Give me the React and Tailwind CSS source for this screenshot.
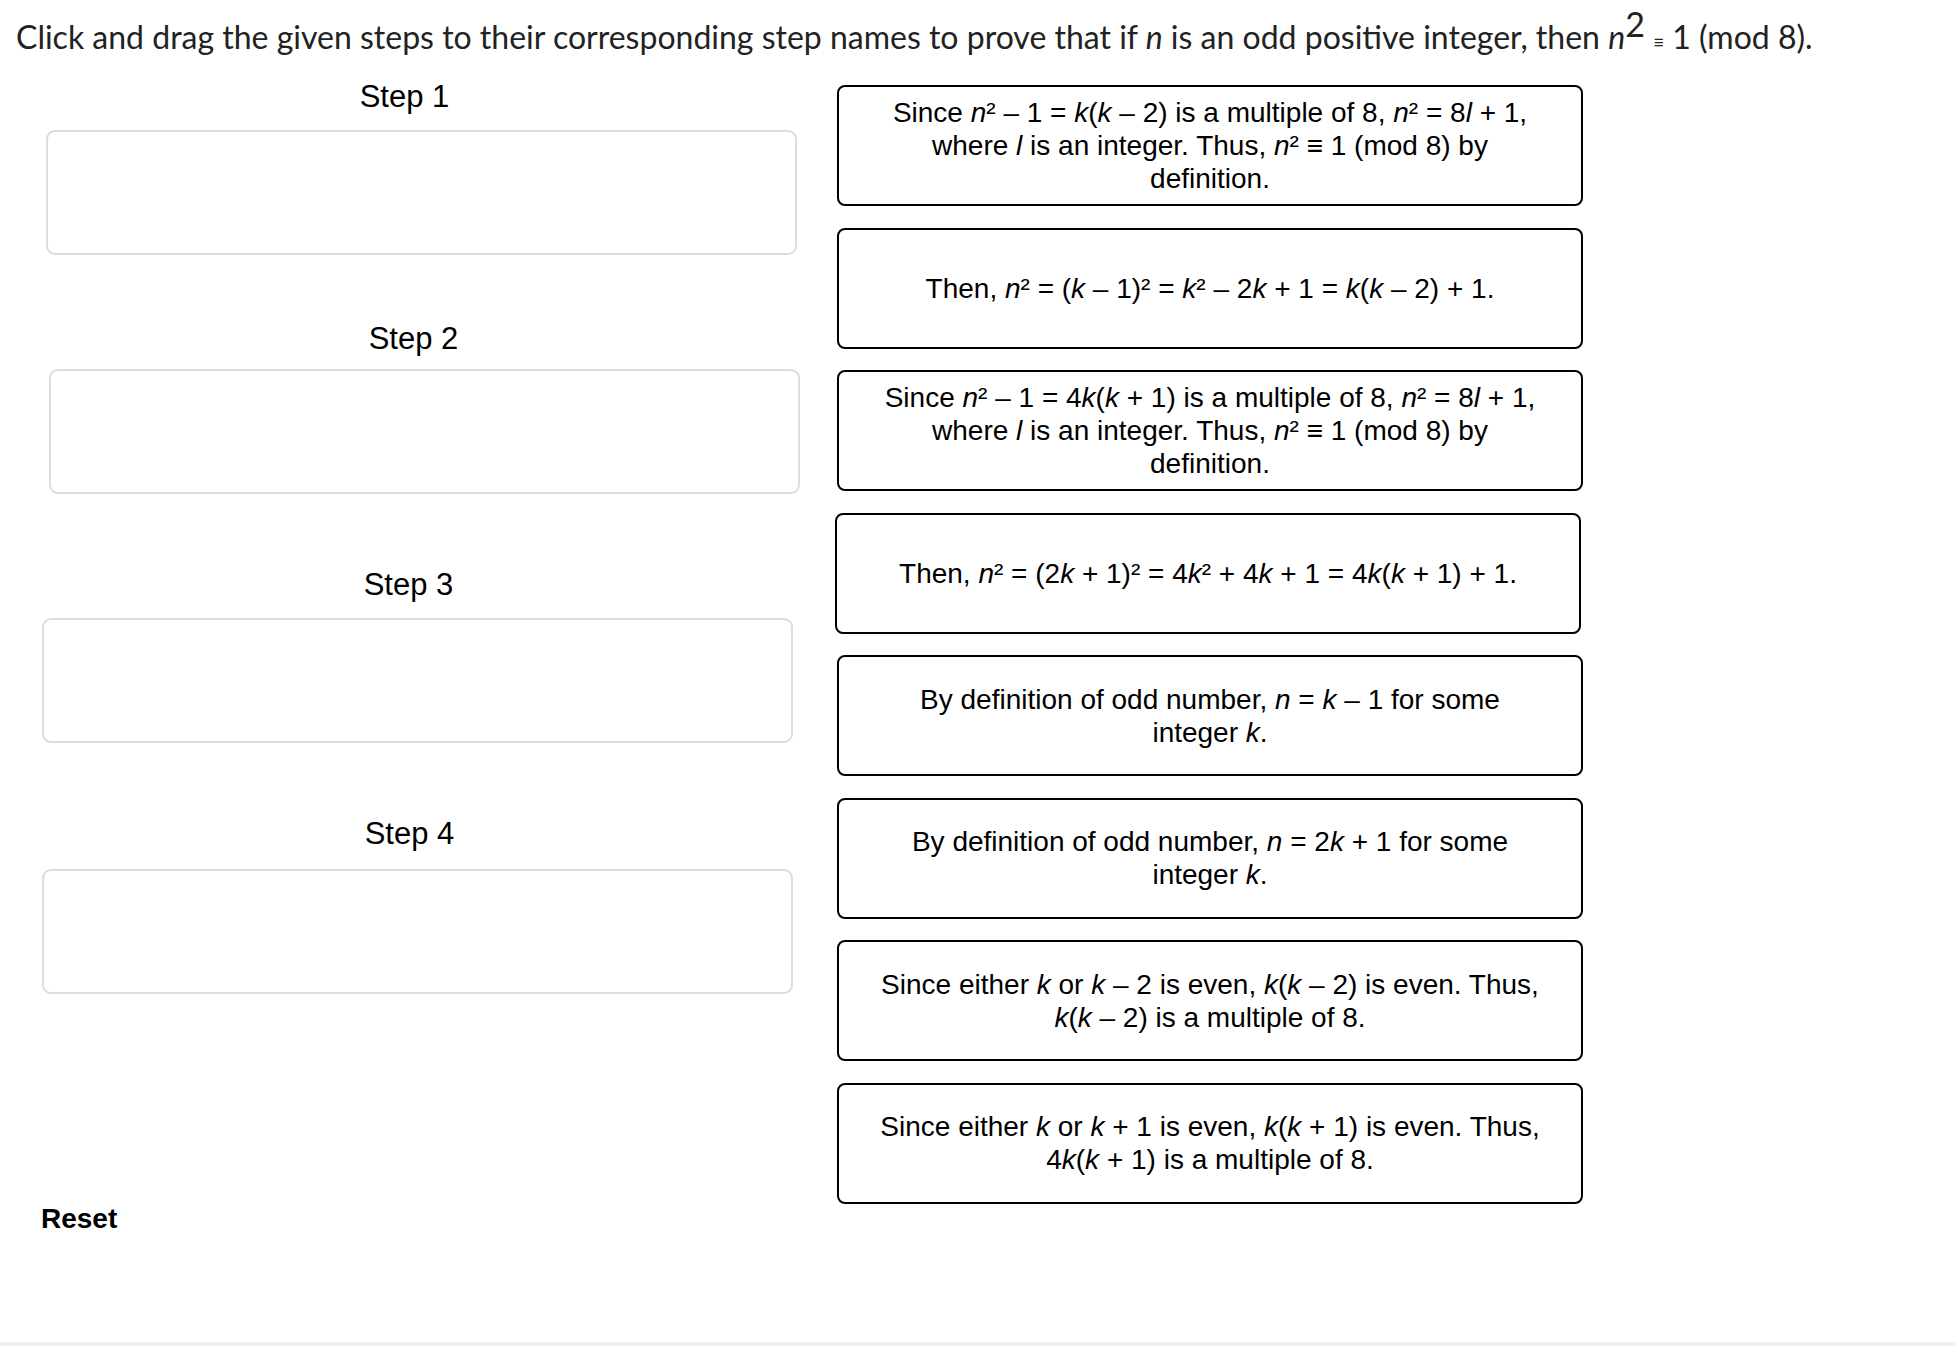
import React from "react";

const sans = { fontFamily: '"Liberation Sans", Arial, Helvetica, sans-serif' };

function Card({ children, className = "" }) {
  return (
    <div
      className={
        "h-[121px] w-[746px] rounded-[8px] border-2 border-black flex items-center justify-center text-center text-[28px] leading-[33px] text-black whitespace-nowrap " +
        className
      }
    >
      <div>{children}</div>
    </div>
  );
}

function StepBox({ className = "" }) {
  return (
    <div
      className={
        "h-[125px] w-[751px] rounded-[9px] border-2 border-[#dcdcdc] bg-white " +
        className
      }
    />
  );
}

export default function App() {
  return (
    <div className="w-[1956px] h-[1346px] bg-white relative overflow-hidden">
      <p
        className="pl-[16px] pt-[16px] text-[32px] leading-[40px] text-[#222] whitespace-nowrap"
        style={{ fontFamily: 'Lato, "Open Sans", sans-serif' }}
      >
        Click and drag the given steps to their corresponding step names to prove that if{" "}
        <i>n</i> is an odd positive integer, then <i>n</i>
        <span className="relative -top-[12px] text-[34px]">2</span>{" "}
        <span className="text-[19px]">≡</span> 1 (mod 8).
      </p>

      <div className="flex mt-[17px]" style={sans}>
        {/* left column */}
        <div className="w-[800px] pl-[42px] flex flex-col text-black">
          <div className="w-[751px] text-center text-[31px] leading-[36px] pr-[26px]">Step 1</div>
          <StepBox className="mt-[15px] ml-[4px]" />

          <div className="w-[751px] text-center text-[31px] leading-[36px] pr-[8px] mt-[66px]">Step 2</div>
          <StepBox className="mt-[12px] ml-[7px]" />

          <div className="w-[751px] text-center text-[31px] leading-[36px] pr-[18px] mt-[73px]">Step 3</div>
          <StepBox className="mt-[15px]" />

          <div className="w-[751px] text-center text-[31px] leading-[36px] pr-[16px] mt-[73px]">Step 4</div>
          <StepBox className="mt-[17px]" />

          <div className="mt-[207px] -ml-[1px] text-[28px] leading-[36px] font-bold">Reset</div>
        </div>

        {/* right column */}
        <div className="ml-[37px] pt-[6px] flex flex-col gap-[21.5px]">
          <Card>
            Since <i>n</i>² – 1 = <i>k</i>(<i>k</i> – 2) is a multiple of 8, <i>n</i>² = 8<i>l</i> + 1,
            <br />
            where <i>l</i> is an integer. Thus, <i>n</i>² ≡ 1 (mod 8) by
            <br />
            definition.
          </Card>
          <Card>
            Then, <i>n</i>² = (<i>k</i> – 1)² = <i>k</i>² – 2<i>k</i> + 1 = <i>k</i>(<i>k</i> – 2) + 1.
          </Card>
          <Card>
            Since <i>n</i>² – 1 = 4<i>k</i>(<i>k</i> + 1) is a multiple of 8, <i>n</i>² = 8<i>l</i> + 1,
            <br />
            where <i>l</i> is an integer. Thus, <i>n</i>² ≡ 1 (mod 8) by
            <br />
            definition.
          </Card>
          <Card className="-ml-[2px]">
            Then, <i>n</i>² = (2<i>k</i> + 1)² = 4<i>k</i>² + 4<i>k</i> + 1 = 4<i>k</i>(<i>k</i> + 1) + 1.
          </Card>
          <Card>
            By definition of odd number, <i>n</i> = <i>k</i> – 1 for some
            <br />
            integer <i>k</i>.
          </Card>
          <Card>
            By definition of odd number, <i>n</i> = 2<i>k</i> + 1 for some
            <br />
            integer <i>k</i>.
          </Card>
          <Card>
            Since either <i>k</i> or <i>k</i> – 2 is even, <i>k</i>(<i>k</i> – 2) is even. Thus,
            <br />
            <i>k</i>(<i>k</i> – 2) is a multiple of 8.
          </Card>
          <Card>
            Since either <i>k</i> or <i>k</i> + 1 is even, <i>k</i>(<i>k</i> + 1) is even. Thus,
            <br />
            4<i>k</i>(<i>k</i> + 1) is a multiple of 8.
          </Card>
        </div>
      </div>

      <div className="absolute left-0 right-0 bottom-0 h-[4px] bg-[#f0f0f0]" />
    </div>
  );
}
